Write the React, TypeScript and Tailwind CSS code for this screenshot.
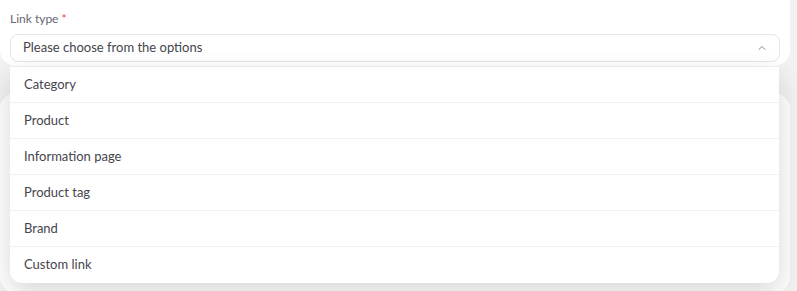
import { ChevronUp } from "lucide-react";

const options = [
  "Category",
  "Product",
  "Information page",
  "Product tag",
  "Brand",
  "Custom link",
];

const App: React.FC = () => {
  return (
    <div
      className="relative h-[291px] w-[797px] overflow-hidden bg-[#f2f2f3]"
      style={{ fontFamily: "Lato, 'Noto Sans', sans-serif" }}
    >
      {/* field card */}
      <div className="relative z-10 mr-[7px] rounded-b-2xl bg-white px-[10px] pb-[4px] pt-[11px]">
        <label className="block text-[12px] leading-4 text-[#666670]">
          Link type <span className="text-[#e5484d]">*</span>
        </label>
        <div className="mt-[7px] flex h-[28px] items-center justify-between rounded-lg border border-[#e6e6e8] bg-white pl-[12px] pr-[11px]">
          <span className="text-[13px] text-[#45454d]">
            Please choose from the options
          </span>
          <ChevronUp size={12} strokeWidth={1.6} className="text-[#6b6b72]" />
        </div>
      </div>

      {/* next card, hidden behind menu */}
      <div className="mr-[7px] mt-[27px] h-[200px] rounded-2xl bg-white" />

      {/* open menu */}
      <div className="absolute left-[10px] top-[67px] z-20 w-[769px] overflow-hidden rounded-b-xl bg-white shadow-[0_10px_28px_rgba(0,0,0,0.16)]">
        {options.map((option, index) => (
          <div
            key={`option-${index}`}
            className={`flex h-9 items-center px-[14px] text-[13px] text-[#45454d] ${
              index < options.length - 1 ? "border-b border-[#f0f0f1]" : ""
            }`}
          >
            {option}
          </div>
        ))}
      </div>
    </div>
  );
};

export default App;
